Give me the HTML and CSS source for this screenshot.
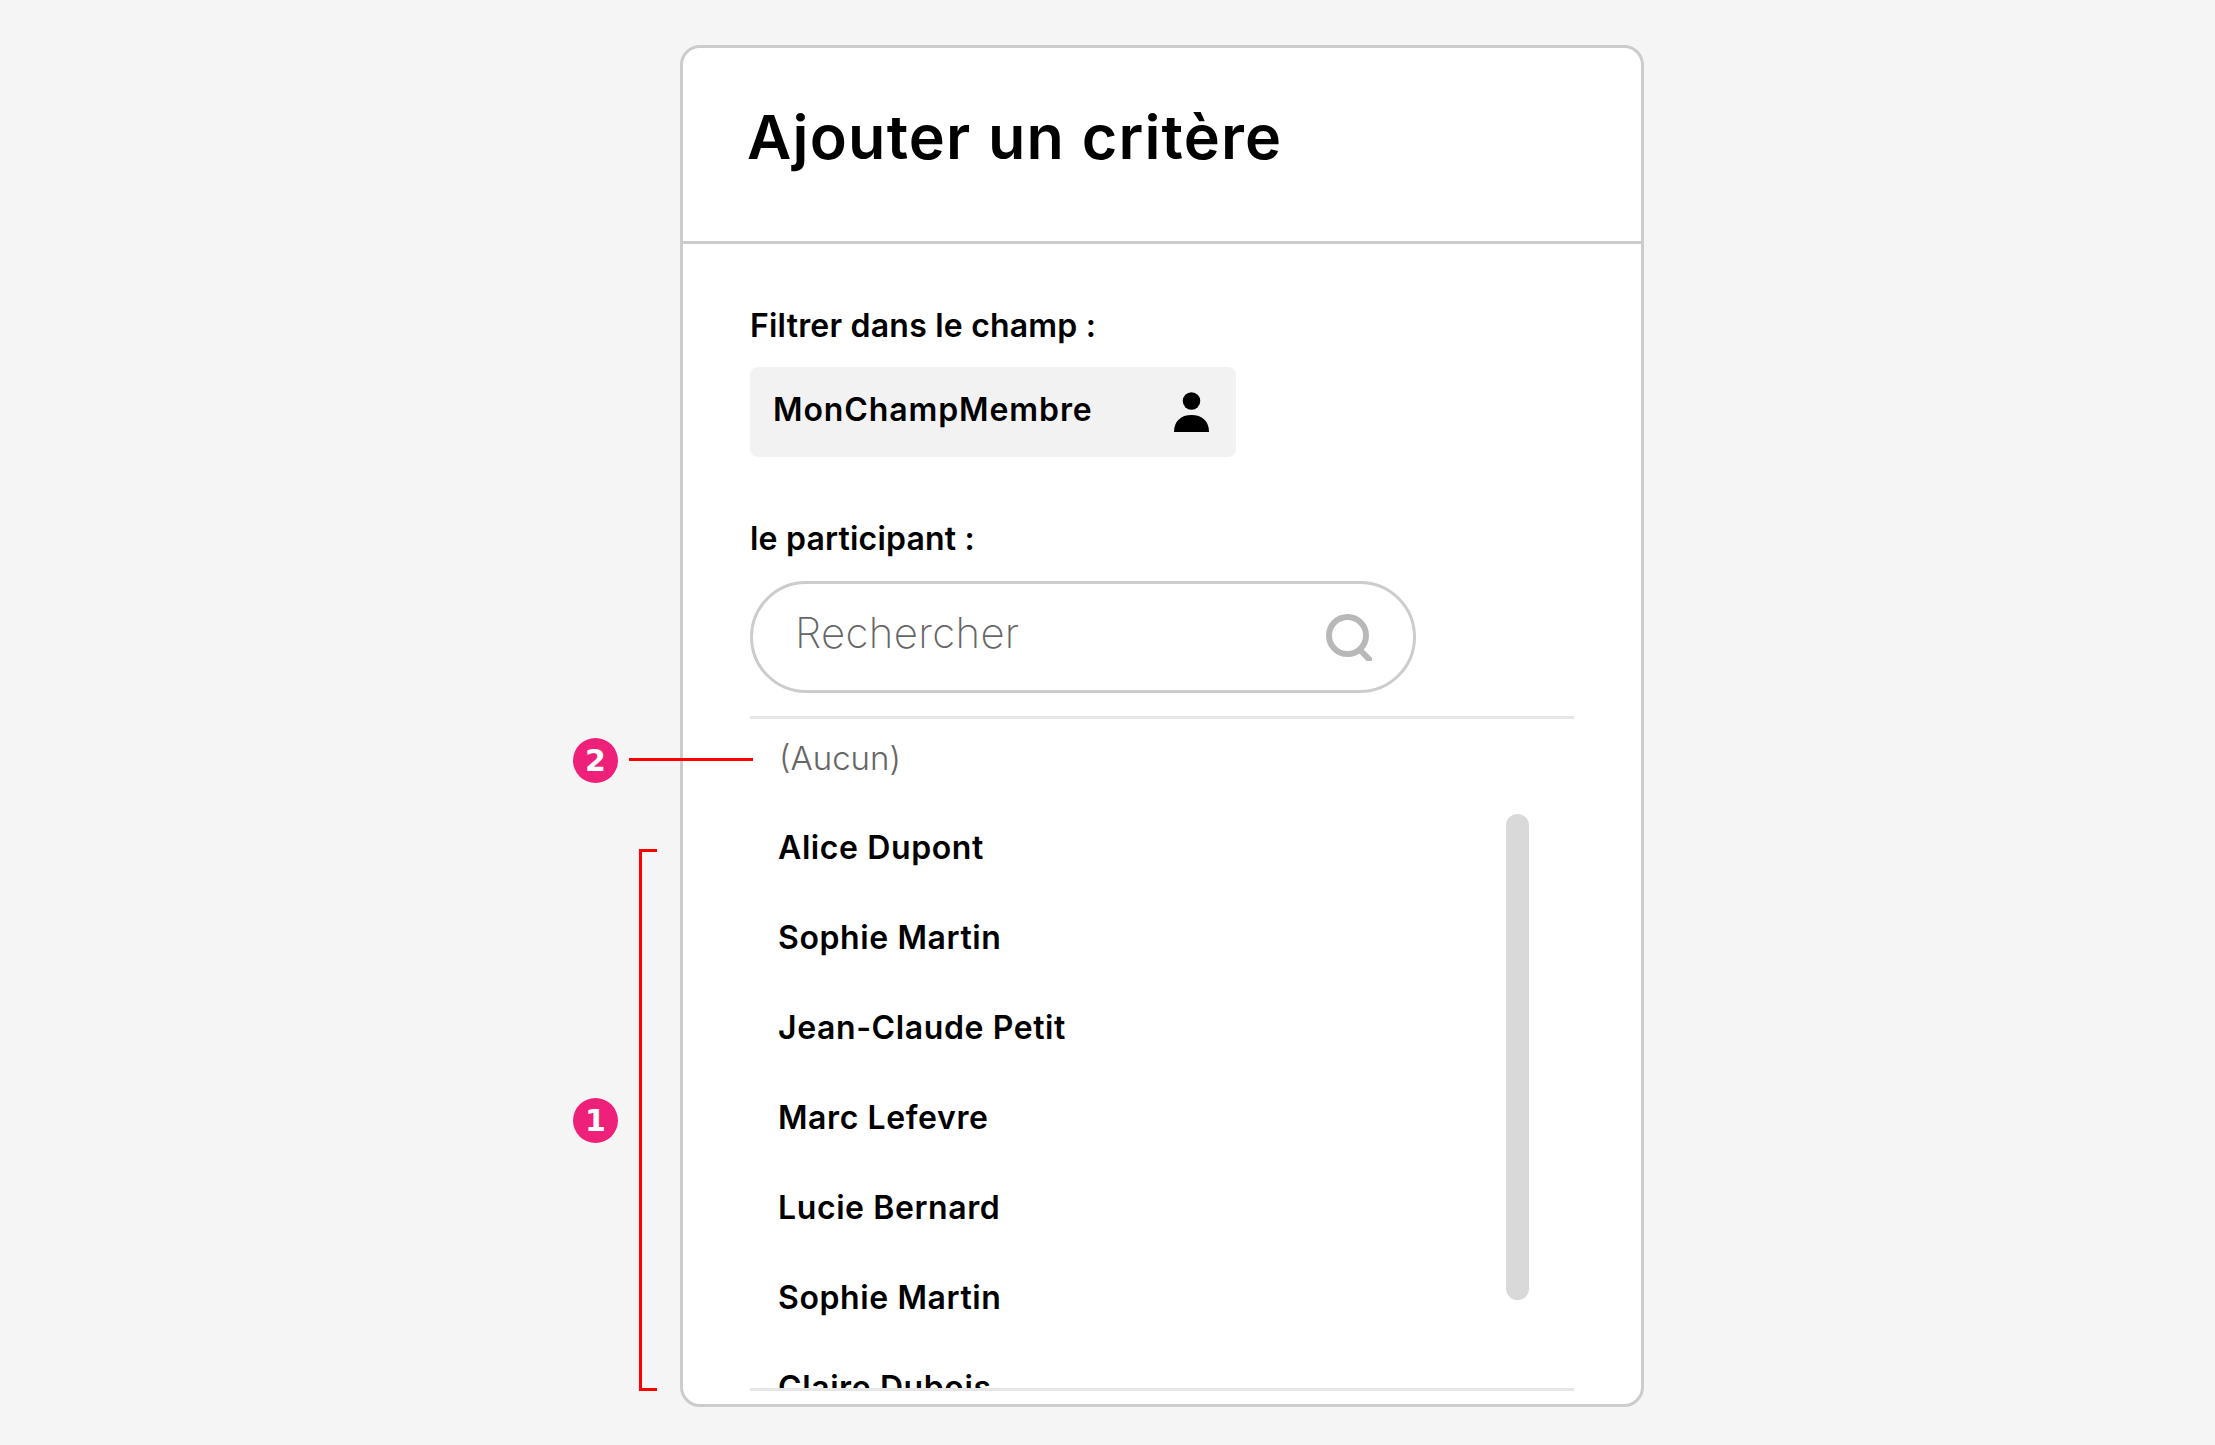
FILE: index.html
```html
<!DOCTYPE html>
<html lang="fr">
<head>
    <meta charset="UTF-8">
    <meta name="viewport" content="width=device-width, initial-scale=1.0">
    <title>Ajouter un critère</title>
    <link rel="stylesheet" href="styles.css">
</head>
<body>
    <div class="stage">
        <div class="card">
            <div class="card-header">
                <h1>Ajouter un critère</h1>
            </div>

            <div class="card-body">
                <div class="field-label">Filtrer dans le champ :</div>
                <div class="field-box">
                    <span>MonChampMembre</span>
                    <svg class="person-icon" width="35" height="40" viewBox="0 0 35 40">
                        <circle cx="17.5" cy="9" r="8.75" fill="#000"/>
                        <path d="M0 40 C0 29 7 23 17.5 23 C28 23 35 29 35 40 Z" fill="#000"/>
                    </svg>
                </div>

                <div class="field-label participant-label">le participant :</div>
                <div class="search-box">
                    <span class="search-text">Rechercher</span>
                    <svg class="search-icon" width="46" height="47" viewBox="0 0 46 47">
                        <circle cx="21.5" cy="21.5" r="18.5" fill="none" stroke="#b8b8b8" stroke-width="6"/>
                        <path d="M34 36 L43 45" fill="none" stroke="#b8b8b8" stroke-width="6" stroke-linecap="round"/>
                    </svg>
                </div>

                <div class="list-box">
                    <div class="list-none">(Aucun)</div>
                    <ul class="list-names">
                        <li>Alice Dupont</li>
                        <li>Sophie Martin</li>
                        <li>Jean-Claude Petit</li>
                        <li>Marc Lefevre</li>
                        <li>Lucie Bernard</li>
                        <li>Sophie Martin</li>
                        <li>Claire Dubois</li>
                    </ul>
                    <div class="scrollbar"></div>
                </div>
            </div>
        </div>

        <!-- annotations -->
        <div class="badge badge-two">2</div>
        <div class="pointer-line"></div>
        <div class="badge badge-one">1</div>
        <div class="bracket"></div>
    </div>
</body>
</html>
```

FILE: styles.css
```css
* {
    margin: 0;
    padding: 0;
    box-sizing: border-box;
}

body {
    font-family: Inter, 'Noto Sans', sans-serif;
    background: #f5f5f5;
    color: #000;
    min-height: 100vh;
}

.stage {
    position: relative;
    width: 2215px;
    height: 1445px;
    padding: 45px 0 0 680px;
    overflow: hidden;
}

.card {
    width: 964px;
    height: 1362px;
    background: white;
    border: 3px solid #cccccc;
    border-radius: 20px;
    overflow: hidden;
}

.card-header {
    height: 196px;
    border-bottom: 3px solid #cccccc;
    padding: 53px 0 0 64px;
}

h1 {
    font-size: 61px;
    line-height: 72px;
    font-weight: 600;
    letter-spacing: 1.2px;
}

.card-body {
    padding: 62px 66px 0 67px;
}

.field-label {
    font-size: 32px;
    line-height: 40px;
    font-weight: 600;
    letter-spacing: 0.2px;
}

.field-box {
    width: 486px;
    height: 90px;
    margin-top: 21px;
    padding: 0 27px 0 23px;
    background: #f2f2f2;
    border-radius: 8px;
    display: flex;
    align-items: center;
    justify-content: space-between;
    font-size: 32px;
    font-weight: 600;
    letter-spacing: 0.9px;
}

.field-box span {
    margin-bottom: 5px;
}

.person-icon {
    display: block;
}

.participant-label {
    margin-top: 62px;
}

.search-box {
    width: 666px;
    height: 112px;
    margin-top: 22px;
    padding: 0 41px 0 42px;
    border: 3px solid #cccccc;
    border-radius: 56px;
    display: flex;
    align-items: center;
    justify-content: space-between;
}

.search-text {
    margin-bottom: 10px;
    font-size: 42px;
    font-weight: 200;
    letter-spacing: 0.3px;
    color: #666;
}

.search-icon {
    display: block;
}

.list-box {
    position: relative;
    width: 824px;
    height: 675px;
    margin-top: 23px;
    border-top: 3px solid #e6e6e6;
    border-bottom: 3px solid #e6e6e6;
    overflow: hidden;
}

.list-none {
    height: 84px;
    padding: 19px 0 0 29px;
    font-size: 33px;
    line-height: 40px;
    font-weight: 300;
    color: #666;
}

.list-names {
    list-style: none;
}

.list-names li {
    height: 90px;
    padding-left: 28px;
    font-size: 32px;
    line-height: 90px;
    font-weight: 600;
    letter-spacing: 0.6px;
}

.scrollbar {
    position: absolute;
    left: 756px;
    top: 95px;
    width: 23px;
    height: 486px;
    background: #d9d9d9;
    border-radius: 12px;
}

.badge {
    position: absolute;
    left: 573px;
    width: 45px;
    height: 45px;
    border-radius: 50%;
    background: #ee2079;
    color: white;
    display: flex;
    align-items: center;
    justify-content: center;
    font-family: 'DejaVu Sans', sans-serif;
    font-size: 30px;
    font-weight: 700;
}

.badge-two {
    top: 738px;
}

.badge-one {
    top: 1098px;
}

.pointer-line {
    position: absolute;
    left: 629px;
    top: 758px;
    width: 124px;
    height: 3px;
    background: #ff0000;
}

.bracket {
    position: absolute;
    left: 639px;
    top: 849px;
    width: 18px;
    height: 542px;
    border: 3px solid #ff0000;
    border-right: none;
}
```
